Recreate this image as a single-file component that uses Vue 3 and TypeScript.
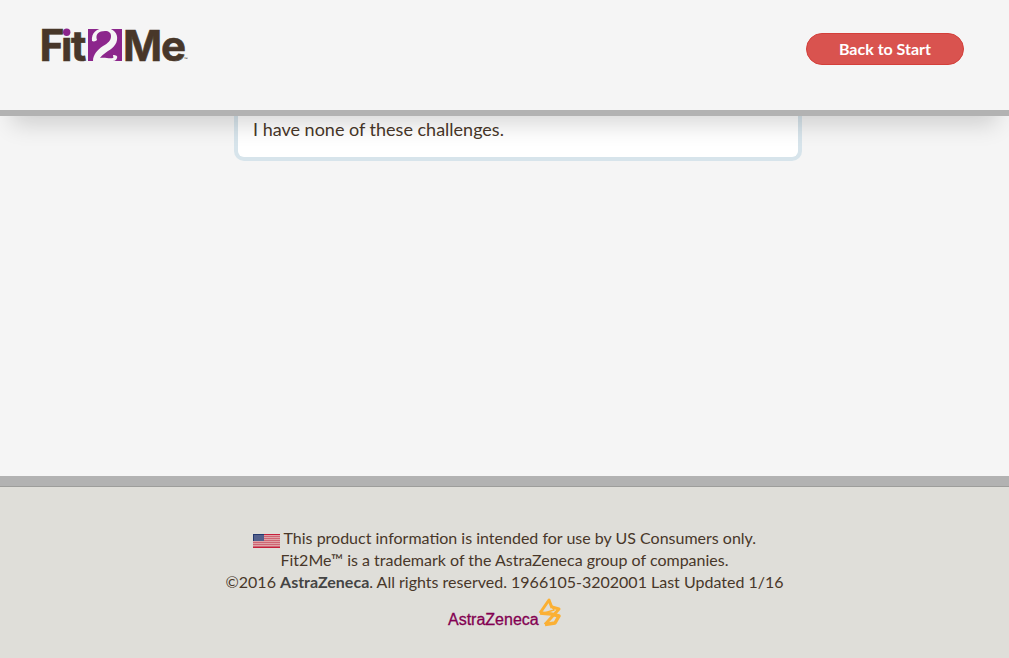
<script setup lang="ts">
const option: string = 'I have none of these challenges.'
const stripes: number[] = [0, 1, 2, 3, 4, 5, 6]
</script>

<template>
  <div class="page">
    <header class="top">
      <a class="brand" href="#" aria-label="Fit2Me home">
        <svg width="160" height="56" viewBox="-6 -10 160 56">
          <text class="word initial" x="-2" y="34">F</text>
          <g class="word">
            <text x="20" y="34">ı</text>
            <text x="30" y="34">t</text>
            <text x="82" y="34">M</text>
            <text x="120" y="34">e</text>
          </g>
          <circle cx="25.700" cy="5.300" r="3.700" fill="#8c268c" />
          <rect x="47" y="2" width="34" height="32" fill="#8c268c" />
          <path
            d="M51 14C50 6 56 1 64 1C73 1 77 7 76 13C75 20 68 23 63 27C61 28 60 30 59 31C64 30 68 32 72 31C73 30 72 30 72 28C75 28 77 29 76 31C75 34 73 34 70 34H52C52 28 56 23 62 19C67 16 70 14 70 9C70 6 68 4 64 4C58 4 54 7 56 13C55 14 53 15 51 14Z"
            fill="#f5f5f5"
          />
          <text class="mark" x="143" y="34">™</text>
        </svg>
      </a>
      <button class="restart" type="button">Back to Start</button>
    </header>

    <main class="content">
      <section class="card">{{ option }}</section>
    </main>

    <footer class="bottom">
      <p class="legal">
        <svg class="flag" width="27" height="14" viewBox="0 0 27 14" role="img" aria-label="United States">
          <rect width="27" height="14" fill="#dfa3a7" />
          <rect v-for="n in stripes" :key="n" x="0" :y="n * 2" width="27" height="1" fill="#cf6573" />
          <rect width="27" height="1" fill="#c71f3c" />
          <rect y="13" width="27" height="1" fill="#c71f3c" />
          <rect width="11" height="7" fill="#53608c" />
          <path d="M0 0.500H11M0.500 0V7" stroke="#24386f" />
        </svg>
        This product information is intended for use by US Consumers only.<br />
        Fit2Me™ is a trademark of the AstraZeneca group of companies.<br />
        ©2016 <a href="#">AstraZeneca</a>. All rights reserved. 1966105-3202001 Last Updated 1/16
      </p>
      <svg class="company" width="114" height="30" viewBox="0 0 114 30" role="img" aria-label="AstraZeneca">
        <text class="company-name" x="0" y="27">AstraZeneca</text>
        <g fill="none" stroke="#fbb034" stroke-linejoin="round">
          <path d="M92 15L101 2L104 10" stroke-width="3" />
          <path d="M104 9L111 11L97 26.500" stroke-width="3" />
          <path d="M92 15L103 16L111 18L107 25L97 26.500" stroke-width="3.500" />
          <path d="M101 3L106 12L93 16" stroke-width="1.500" />
        </g>
      </svg>
    </footer>
  </div>
</template>

<style>
body {
  background: #f5f5f5;
}
</style>

<style scoped>
.page {
  display: flex;
  flex-direction: column;
  min-height: 100vh;
  color: #483729;
  font-family: Lato, "Liberation Sans", sans-serif;
}
.top {
  position: relative;
  z-index: 1;
  display: flex;
  justify-content: space-between;
  align-items: flex-start;
  box-sizing: border-box;
  height: 116px;
  padding: 17px 45px 0 35px;
  background: #f5f5f5;
  border-bottom: 6px solid #b2b2b2;
  box-shadow: 0 20px 22px -12px rgba(0, 0, 0, 0.16);
}
.brand svg {
  display: block;
  overflow: visible;
}
.word {
  fill: #483729;
  stroke: #483729;
  stroke-width: 0.6px;
  font-family: Inter, sans-serif;
  font-size: 42px;
  font-weight: 700;
}
.initial {
  font-family: Lato, sans-serif;
  font-size: 44px;
  font-weight: 900;
}
.mark {
  fill: #483729;
  font-size: 5px;
}
.restart {
  width: 158px;
  height: 32px;
  margin-top: 16px;
  padding: 0;
  border: 1px solid #d43f3a;
  border-radius: 16px;
  background: #d9534f;
  color: #fff;
  font: 700 16px/30px Lato, sans-serif;
  cursor: pointer;
}
.content {
  flex: 1;
  padding: 0 207px 0 234px;
}
.card {
  padding: 0 15px 14px;
  border: 4px solid #d7e4eb;
  border-top: 0;
  border-radius: 0 0 10px 10px;
  background: #fff;
  font-size: 18px;
  line-height: 27px;
}
.bottom {
  padding: 41px 20px 30px;
  border-top: 10px solid #b2b2b2;
  background: #dfded9;
  box-shadow: inset 0 1px #9d9d9b;
  text-align: center;
}
.legal {
  margin: 0;
  font-size: 16px;
  line-height: 22px;
}
.legal a {
  color: #444;
  font-weight: 700;
  text-decoration: none;
}
.flag {
  vertical-align: -4px;
}
.company {
  display: block;
  margin: 5px auto 0;
  overflow: visible;
}
.company-name {
  fill: #830051;
  stroke: #830051;
  stroke-width: 0.3px;
  font: 16px "Liberation Sans", sans-serif;
}
</style>
